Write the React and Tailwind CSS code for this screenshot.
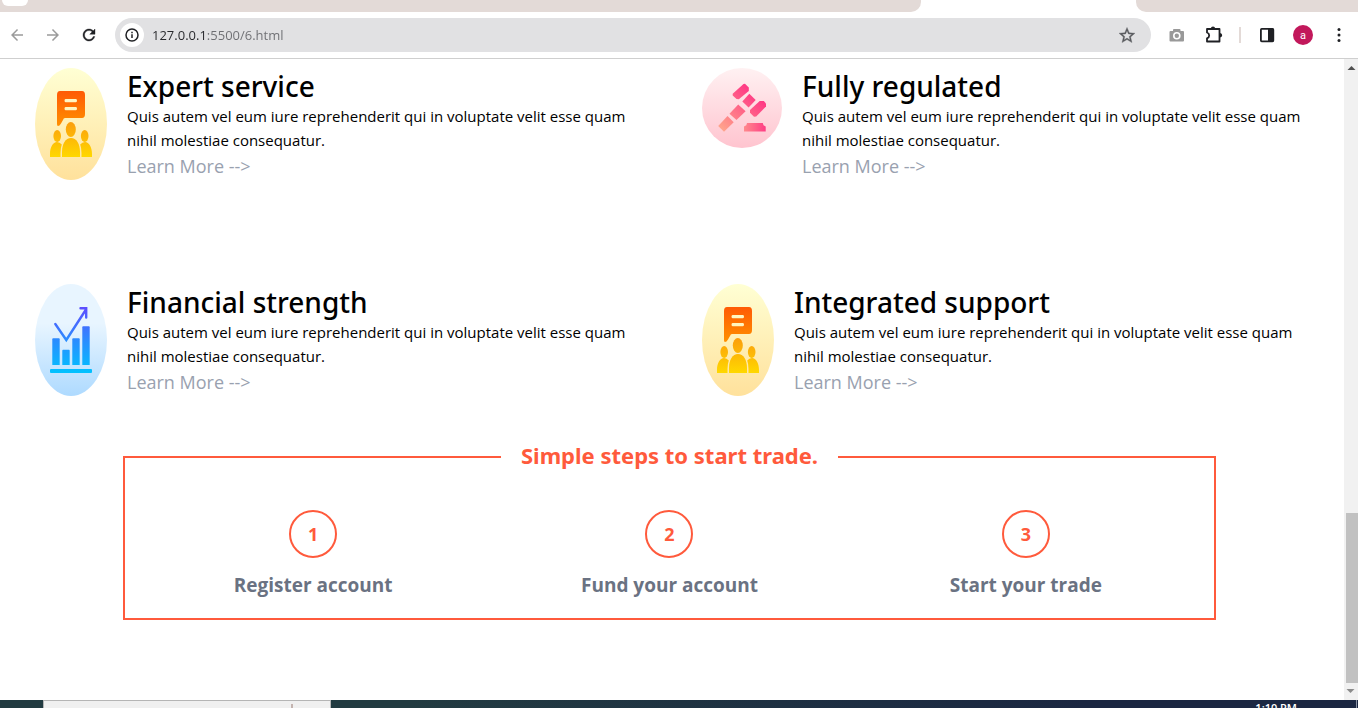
import React from "react";

function SupportIcon() {
  return (
    <svg className="w-[72px] shrink-0" viewBox="0 0 72 112" preserveAspectRatio="none" aria-hidden="true">
      <defs>
        <linearGradient id="sun" x1="0" y1="0" x2="0" y2="1">
          <stop offset="0" stopColor="#ffffd4" />
          <stop offset="1" stopColor="#ffe19c" />
        </linearGradient>
        <linearGradient id="flame" gradientUnits="userSpaceOnUse" x1="0" y1="23" x2="0" y2="58">
          <stop offset="0" stopColor="#ff5a05" />
          <stop offset="1" stopColor="#ff9000" />
        </linearGradient>
        <linearGradient id="gold" gradientUnits="userSpaceOnUse" x1="0" y1="54" x2="0" y2="89">
          <stop offset="0" stopColor="#fb9d0c" />
          <stop offset="1" stopColor="#ffd800" />
        </linearGradient>
      </defs>
      <ellipse cx="36" cy="56" rx="36" ry="56" fill="url(#sun)" />
      <path
        fill="url(#flame)"
        fillRule="evenodd"
        d="M25 23H47Q50 23 50 27V46Q50 50 47 50H30Q28.5 50 28 52L26 55.5Q24.5 58 23 58Q22 58 22 56V27Q22 23 25 23ZM30.5 31Q29.5 31 29.5 32.6Q29.5 34.3 30.5 34.3H41Q42 34.3 42 32.6Q42 31 41 31ZM30.5 38.9Q29.5 38.9 29.5 40.6Q29.5 42.3 30.5 42.3H41Q42 42.3 42 40.6Q42 38.9 41 38.9Z"
      />
      <g fill="url(#gold)">
        <ellipse cx="35.8" cy="61.5" rx="5" ry="7.5" />
        <path d="M27 89V84C27 76 30.5 70 36 70S45 76 45 84V89Z" />
        <ellipse cx="22.2" cy="68" rx="3.8" ry="6" />
        <path d="M15 89V86C15 79 18 74 22 74Q24.8 74 26.8 76.5Q25.5 80 25.5 85V89Z" />
        <ellipse cx="49.7" cy="68" rx="3.8" ry="6" />
        <path d="M57 89V86C57 79 54 74 50 74Q47.2 74 45.2 76.5Q46.5 80 46.5 85V89Z" />
      </g>
    </svg>
  );
}

function ChartIcon() {
  return (
    <svg className="w-[72px] shrink-0" viewBox="0 0 72 112" preserveAspectRatio="none" aria-hidden="true">
      <defs>
        <linearGradient id="sky" x1="0" y1="0" x2="0" y2="1">
          <stop offset="0.35" stopColor="#e8f5ff" />
          <stop offset="1" stopColor="#aedaff" />
        </linearGradient>
        <linearGradient id="ocean" gradientUnits="userSpaceOnUse" x1="0" y1="23" x2="0" y2="89">
          <stop offset="0" stopColor="#5d4dff" />
          <stop offset="0.5" stopColor="#2b8cff" />
          <stop offset="1" stopColor="#00c2ff" />
        </linearGradient>
      </defs>
      <ellipse cx="36" cy="56" rx="36" ry="56" fill="url(#sky)" />
      <g fill="url(#ocean)">
        <path d="M18 54.3H24Q24.7 54.3 24.7 55.3V81H17.3V55.3Q17.3 54.3 18 54.3Z" />
        <path d="M28 65.7H34Q34.7 65.7 34.7 66.7V81H27.3V66.7Q27.3 65.7 28 65.7Z" />
        <path d="M38 54.3H44Q44.7 54.3 44.7 55.3V81H37.3V55.3Q37.3 54.3 38 54.3Z" />
        <path d="M48 42.3H54Q54.7 42.3 54.7 43.3V81H47.3V43.3Q47.3 42.3 48 42.3Z" />
        <rect x="15" y="85" width="42" height="4" rx="1" />
      </g>
      <path
        d="M20.3 40L31.3 56L51 25.5M45.5 24.2H51.2V33.5"
        fill="none"
        stroke="url(#ocean)"
        strokeWidth="2.4"
        strokeLinecap="round"
        strokeLinejoin="miter"
      />
    </svg>
  );
}

function GavelIcon() {
  return (
    <svg className="size-20 shrink-0" viewBox="0 0 80 80" aria-hidden="true">
      <defs>
        <linearGradient id="blush" x1="0" y1="0" x2="0" y2="1">
          <stop offset="0" stopColor="#fff1f2" />
          <stop offset="1" stopColor="#ffc4cf" />
        </linearGradient>
        <linearGradient id="rose" gradientUnits="userSpaceOnUse" x1="52" y1="26" x2="18" y2="62">
          <stop offset="0" stopColor="#ff3b85" />
          <stop offset="1" stopColor="#ffa78c" />
        </linearGradient>
        <linearGradient id="coral" gradientUnits="userSpaceOnUse" x1="64" y1="0" x2="42" y2="0">
          <stop offset="0" stopColor="#ff3b85" />
          <stop offset="1" stopColor="#ff8a8c" />
        </linearGradient>
      </defs>
      <circle cx="40" cy="40" r="40" fill="url(#blush)" />
      <g fill="url(#rose)">
        <path d="M43 15.7L46.8 19.5V23L36.8 31.2L34.5 31L30.7 27.5V25.7L41.5 15.9Z" />
        <path d="M47.3 25.8L53.7 32L46.6 39.6L40.3 33.4Z" />
        <path d="M57.7 33L61.8 33L64 35.5V38.5L54.2 48.6L52 48.7L48 44.8V42Z" />
        <path d="M36.2 36.6L43.6 43.2L34.5 52L27.5 45.8Z" />
        <path d="M25.5 48L31.7 54.3L22 63.7L16.2 58Z" />
      </g>
      <path fill="url(#coral)" d="M45 55H60.8L61.5 57.3L63.7 58.5V63.5H42V58.5L44.3 57.3Z" />
    </svg>
  );
}

const features = [
  { title: "Expert service", Icon: SupportIcon },
  { title: "Fully regulated", Icon: GavelIcon },
  { title: "Financial strength", Icon: ChartIcon },
  { title: "Integrated support", Icon: SupportIcon },
];

const steps = ["Register account", "Fund your account", "Start your trade"];

function Feature({ title, Icon }) {
  return (
    <article className="flex gap-5">
      <Icon />
      <div className="min-w-0">
        <h2 className="font-['Noto_Sans','Open_Sans',sans-serif] text-[28px] leading-9 font-medium text-black">{title}</h2>
        <p className="text-[15px] leading-6 text-black">
          Quis autem vel eum iure reprehenderit qui in voluptate velit esse quam
          <br />
          nihil molestiae consequatur.
        </p>
        <a href="#learn" className="block text-lg leading-7 text-gray-400">
          Learn More --&gt;
        </a>
      </div>
    </article>
  );
}

function Arrow({ flip }) {
  return (
    <svg className={flip ? "h-[17px] w-3.5 rotate-180" : "h-[17px] w-3.5"} viewBox="0 0 14 17" aria-hidden="true">
      <path d="M3.5 11L7.5 7L11.5 11Z" fill={flip ? "#8b8b8b" : "#505050"} />
    </svg>
  );
}

function TabStrip() {
  return (
    <div className="flex h-3 bg-white">
      <div className="flex-1 rounded-br-[10px] bg-[#e3dad7]">
        <div className="ml-0.5 h-1.5 w-[26px] rounded-b-lg bg-white" />
      </div>
      <div className="w-[215px]" />
      <div className="w-[222px] rounded-bl-[10px] bg-[#e3dad7]" />
    </div>
  );
}

function Toolbar() {
  return (
    <header className="flex h-[47px] items-center border-b border-[#cfcfcf] bg-white pr-2.5 pl-2">
      <button type="button" aria-label="Back" className="flex size-[18px] items-center justify-center text-[#9b9b9b]">
        <svg className="size-[18px]" viewBox="0 0 24 24" fill="currentColor">
          <path d="M20 11H7.83l5.59-5.59L12 4l-8 8 8 8 1.41-1.41L7.83 13H20v-2z" />
        </svg>
      </button>
      <button type="button" aria-label="Forward" className="ml-[18px] flex size-[18px] items-center justify-center text-[#9b9b9b]">
        <svg className="size-[18px]" viewBox="0 0 24 24" fill="currentColor">
          <path d="M12 4l-1.41 1.41L16.17 11H4v2h12.17l-5.58 5.59L12 20l8-8z" />
        </svg>
      </button>
      <button type="button" aria-label="Reload" className="ml-[18px] flex size-[18px] items-center justify-center text-[#1f2024]">
        <svg className="size-[18px]" viewBox="0 0 24 24" fill="currentColor">
          <path stroke="currentColor" strokeWidth="0.5" d="M17.65 6.35C16.2 4.9 14.21 4 12 4c-4.42 0-7.99 3.58-7.99 8s3.57 8 7.99 8c3.73 0 6.84-2.55 7.73-6h-2.08c-.82 2.33-3.04 4-5.65 4-3.31 0-6-2.69-6-6s2.69-6 6-6c1.66 0 3.14.69 4.22 1.78L13 11h7V4l-2.35 2.35z" />
        </svg>
      </button>
      <div className="ml-[17px] flex h-[34px] flex-1 items-center rounded-full bg-[#e1e1e3] pr-4 pl-[5px]">
        <button type="button" aria-label="Site information" className="flex size-6 items-center justify-center rounded-full bg-white text-[#1f2024]">
          <svg className="size-4" viewBox="0 0 16 16" fill="none" stroke="currentColor">
            <circle cx="8" cy="8" r="6" strokeWidth="1.5" />
            <path d="M8 7.3V11M8 4.8V6.2" strokeWidth="1.5" />
          </svg>
        </button>
        <input
          type="text"
          aria-label="Address"
          defaultValue="127.0.0.1:5500/6.html"
          className="ml-2 h-6 min-w-0 flex-1 bg-linear-to-r from-[#26272b] from-[54px] to-[#6d6e72] to-[54px] bg-clip-text text-[13px] leading-6 text-transparent outline-none"
        />
        <button type="button" aria-label="Bookmark" className="text-[#5a5b5f]">
          <svg className="size-4" viewBox="2 1.5 20 20" fill="currentColor" stroke="currentColor" strokeWidth="0.4">
            <path d="M22 9.24l-7.19-.62L12 2 9.19 8.63 2 9.24l5.46 4.73L5.82 21 12 17.27 18.18 21l-1.63-7.03L22 9.24zM12 15.4l-3.76 2.27 1-4.28-3.32-2.88 4.38-.38L12 6.1l1.71 4.04 4.38.38-3.32 2.88 1 4.28L12 15.4z" />
          </svg>
        </button>
      </div>
      <button type="button" aria-label="Screenshot" className="ml-[18px] text-[#999999]">
        <svg className="size-4" viewBox="0 0 16 16">
          <path fill="currentColor" d="M1.500 4H4V2.800Q4 2 5 2H10.500Q11.500 2 11.500 3V4H14Q15 4 15 5V13.500Q15 14.500 14 14.500H1.500Q.5 14.500 .5 13.500V5Q.5 4 1.500 4Z" />
          <circle cx="7.800" cy="8.800" r="3" fill="none" stroke="#fff" strokeWidth="1.600" />
        </svg>
      </button>
      <button type="button" aria-label="Extensions" className="ml-5 text-[#1f2024]">
        <svg className="size-[18px]" viewBox="0 0 18 18">
          <path fill="none" stroke="currentColor" strokeWidth="1.800" strokeLinejoin="round" d="M2 3H14.500V15.500H2V12.300Q4.200 11.500 4.200 9.400Q4.200 7.300 2 6.500Z" />
          <path fill="currentColor" d="M5.800 2.500Q6 .5 8 .5T10.200 2.500ZM15 7Q17.200 7.200 17.200 9.200T15 11.400Z" />
        </svg>
      </button>
      <div className="ml-4 h-4 w-0.5 bg-[#e3dad7]" />
      <button type="button" aria-label="Side panel" className="ml-[18px] text-[#1f2024]">
        <svg className="size-4" viewBox="0 0 16 16">
          <rect x="1.900" y="1.900" width="12.400" height="12.400" rx="0.800" fill="none" stroke="currentColor" strokeWidth="1.800" />
          <rect x="9" y="1.500" width="5.500" height="13" fill="currentColor" />
        </svg>
      </button>
      <button type="button" aria-label="Profile" className="ml-[18px] flex size-5 items-center justify-center rounded-full bg-[#c2185b] font-[Roboto,sans-serif] text-[11px] leading-none text-white">
        a
      </button>
      <button type="button" aria-label="Menu" className="ml-[17px] text-[#1f2024]">
        <svg className="size-[18px]" viewBox="0 0 18 18" fill="currentColor">
          <circle cx="9" cy="3.500" r="1.500" />
          <circle cx="9" cy="9" r="1.500" />
          <circle cx="9" cy="14.500" r="1.500" />
        </svg>
      </button>
    </header>
  );
}

export default function App() {
  return (
    <div className="flex h-screen min-w-0 flex-col overflow-hidden bg-white font-['Open_Sans','Noto_Sans',sans-serif]">
      <TabStrip />
      <Toolbar />
      <div className="flex min-h-0 flex-1">
        <main className="min-w-0 flex-1 overflow-hidden">
          <section className="grid grid-cols-2 gap-x-[60px] gap-y-[104px] px-[35px] pt-[9px]">
            {features.map((f) => (
              <Feature key={f.title} {...f} />
            ))}
          </section>
          <fieldset className="mt-[41px] mr-[128px] ml-[123px] border-2 border-[#ff5a3c] px-2.5 pb-[17px]">
            <legend className="mx-auto px-5 pb-1 font-['Noto_Sans','Open_Sans',sans-serif] text-[22px] leading-9 font-bold text-[#ff5a3c]">
              Simple steps to start trade.
            </legend>
            <ol className="grid grid-cols-3 pt-[33px]">
              {steps.map((s, i) => (
                <li key={s} className="flex flex-col items-center">
                  <span className="flex size-12 items-center justify-center rounded-full border-2 border-[#ff5a3c] text-lg font-bold text-[#ff5a3c]">
                    {i + 1}
                  </span>
                  <span className="mt-[11px] text-[19px] leading-8 font-bold text-gray-500">{s}</span>
                </li>
              ))}
            </ol>
          </fieldset>
        </main>
        <div className="flex w-3.5 flex-col items-center bg-[#f1f1f1]">
          <Arrow />
          <div className="flex-1" />
          <div className="ml-0.5 h-[170px] w-3 bg-[#c1c1c1]" />
          <Arrow flip />
        </div>
      </div>
      <footer className="flex h-2 items-start overflow-hidden bg-linear-to-r from-[#223b41] from-30% to-[#1b2742] to-80% pl-[43px]">
        <div className="flex h-2 w-72 justify-end border border-b-0 border-[#b5b5b5] bg-[#f0f0f0] pt-[3px] pr-[37px]">
          <div className="h-1 w-0.5 bg-[#c4b4b0]" />
        </div>
        <div className="ml-auto text-[11px] leading-4 font-semibold text-white">1:10 PM</div>
        <div className="ml-[59px] h-2 w-px bg-[#8a93a3]" />
        <div className="w-px" />
      </footer>
    </div>
  );
}
